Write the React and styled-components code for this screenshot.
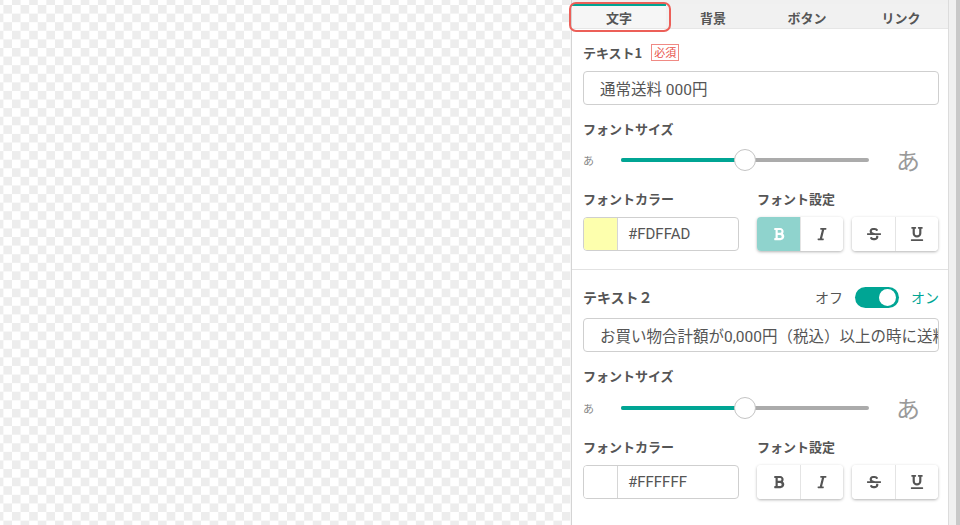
import styled, { createGlobalStyle } from "styled-components";
import { FaBold, FaItalic, FaStrikethrough, FaUnderline } from "react-icons/fa";

const GlobalStyle = createGlobalStyle`
  html, body {
    margin: 0;
    padding: 0;
  }
  body {
    font-family: "Noto Sans CJK JP", sans-serif;
    color: #555;
  }
`;

const TEAL = "#00a594";

const Page = styled.div`
  display: flex;
  width: 960px;
  height: 525px;
  overflow: hidden;
`;

const Canvas = styled.div`
  flex: 1;
  background-color: #fff;
  background-image: repeating-conic-gradient(#ededed 0 25%, #ffffff 0 50%);
  background-size: 17.2px 17.2px;
  background-position: 3.4px -3.6px;
`;

const Panel = styled.aside`
  position: relative;
  width: 376px;
  border-left: 1px solid #d4d4d4;
  border-right: 1px solid #dcdcdc;
  background: #fff;
  display: flex;
  flex-direction: column;
`;

const Scrollbar = styled.div`
  width: 11px;
  background: linear-gradient(to right, #f1f1f1 0 7px, #c9c9c9 7px);
`;

const TabHeader = styled.div`
  padding-top: 4px;
  background: #f0f0f0;
`;

const TabBar = styled.div`
  display: flex;
  height: 24px;
  background: #f1f1f1;
  border-bottom: 1px solid #e6e6e6;
`;

const Tab = styled.div`
  flex: 1;
  display: flex;
  align-items: center;
  justify-content: center;
  font-size: 13px;
  font-weight: 700;
  color: #555;
  border-top: 2px solid ${(p) => (p.$active ? TEAL : "transparent")};
  background: ${(p) => (p.$active ? "#f6f6f6" : "transparent")};
`;

const Highlight = styled.div`
  position: absolute;
  left: -3px;
  top: 2px;
  width: 98px;
  height: 26px;
  border: 2px solid #ec5f58;
  border-radius: 7px;
  pointer-events: none;
`;

const Section = styled.section`
  padding: ${(p) => p.$top}px 9px 18px 11px;
  border-bottom: ${(p) => (p.$divider ? "1px solid #e2e2e2" : "none")};
`;

const LabelRow = styled.div`
  display: flex;
  align-items: center;
  height: ${(p) => (p.$tall ? "22px" : "17px")};
  margin-top: ${(p) => p.$gap || 0}px;
`;

const Label = styled.div`
  font-size: ${(p) => (p.$big ? "14px" : "13px")};
  font-weight: 700;
  line-height: 16px;
  color: #555;
`;

const Required = styled.span`
  margin-left: 9px;
  padding: 0 2px;
  height: 17px;
  line-height: 15px;
  border: 1px solid #f08a84;
  color: #e8524a;
  font-size: 11px;
  box-sizing: border-box;
`;

const TextInput = styled.div`
  margin-top: 10px;
  height: 34px;
  box-sizing: border-box;
  border: 1px solid #cfcfcf;
  border-radius: 4px;
  padding: 0 16px;
  display: flex;
  align-items: center;
  font-family: "Roboto", "Noto Sans CJK JP", sans-serif;
  font-size: 15.5px;
  color: #555;
  white-space: nowrap;
  overflow: hidden;
`;

const SliderRow = styled.div`
  display: flex;
  align-items: center;
  height: 24px;
  margin-top: ${(p) => p.$gap}px;
`;

const SmallA = styled.span`
  width: 38px;
  font-size: 11px;
  color: #888;
`;

const BigA = styled.span`
  margin-left: 27px;
  font-size: 24px;
  color: #9a9a9a;
  line-height: 24px;
`;

const Track = styled.div`
  position: relative;
  width: 248px;
  height: 4px;
  border-radius: 2px;
  background: #ababab;
`;

const Fill = styled.div`
  height: 100%;
  border-radius: 2px;
  background: ${TEAL};
`;

const Knob = styled.div`
  position: absolute;
  top: 50%;
  width: 22px;
  height: 22px;
  margin: -11px 0 0 -11px;
  box-sizing: border-box;
  border-radius: 50%;
  border: 1px solid #c4c4c4;
  background: #fff;
`;

const TwoCols = styled.div`
  display: grid;
  grid-template-columns: 174px 1fr;
  margin-top: ${(p) => p.$gap}px;
`;

const ColHead = styled.div`
  height: 16px;
  display: flex;
  align-items: center;
`;

const ColorInput = styled.div`
  margin-top: 10px;
  width: 156px;
  height: 34px;
  box-sizing: border-box;
  border: 1px solid #cfcfcf;
  border-radius: 4px;
  display: flex;
  overflow: hidden;
`;

const Swatch = styled.div`
  width: 33px;
  border-right: 1px solid #d6d6d6;
  background: ${(p) => p.$color};
`;

const HexText = styled.div`
  display: flex;
  align-items: center;
  padding-left: 10px;
  font-family: "Roboto", sans-serif;
  font-size: 15px;
  color: #555;
`;

const Groups = styled.div`
  margin-top: 10px;
  display: flex;
  gap: 9px;
`;

const ButtonGroup = styled.div`
  display: flex;
  border-radius: 4px;
  overflow: hidden;
  box-shadow: 0 1px 3px rgba(0, 0, 0, 0.3);
`;

const StyleButton = styled.button`
  width: 43px;
  height: 34px;
  padding: 0;
  border: 0;
  display: flex;
  align-items: center;
  justify-content: center;
  font-size: 14px;
  background: ${(p) => (p.$active ? "#8fd3cd" : "#fff")};
  color: ${(p) => (p.$active ? "#fff" : "#555")};
  & + & {
    border-left: 1px solid #e4e4e4;
  }
`;

const SwitchWrap = styled.div`
  margin-left: auto;
  display: flex;
  align-items: center;
  font-size: 14px;
`;

const SwitchText = styled.span`
  color: ${(p) => (p.$on ? TEAL : "#555")};
`;

const Switch = styled.div`
  position: relative;
  width: 44px;
  height: 21px;
  margin: 0 12px;
  border-radius: 11px;
  background: ${TEAL};
`;

const SwitchKnob = styled.div`
  position: absolute;
  top: 2px;
  right: 3px;
  width: 17px;
  height: 17px;
  border-radius: 50%;
  background: #fff;
`;

function FontSlider({ value, gap }) {
  return (
    <SliderRow $gap={gap}>
      <SmallA>あ</SmallA>
      <Track>
        <Fill style={{ width: `${value}%` }} />
        <Knob style={{ left: `${value}%` }} />
      </Track>
      <BigA>あ</BigA>
    </SliderRow>
  );
}

function StyleControls({ color, bold, gap }) {
  return (
    <TwoCols $gap={gap}>
      <div>
        <ColHead>
          <Label>フォントカラー</Label>
        </ColHead>
        <ColorInput>
          <Swatch $color={color} />
          <HexText>{color}</HexText>
        </ColorInput>
      </div>
      <div>
        <ColHead>
          <Label>フォント設定</Label>
        </ColHead>
        <Groups>
          <ButtonGroup>
            <StyleButton $active={bold}>
              <FaBold />
            </StyleButton>
            <StyleButton>
              <FaItalic />
            </StyleButton>
          </ButtonGroup>
          <ButtonGroup>
            <StyleButton>
              <FaStrikethrough />
            </StyleButton>
            <StyleButton>
              <FaUnderline />
            </StyleButton>
          </ButtonGroup>
        </Groups>
      </div>
    </TwoCols>
  );
}

export default function App() {
  const tabs = ["文字", "背景", "ボタン", "リンク"];
  return (
    <>
      <GlobalStyle />
      <Page>
        <Canvas />
        <Panel>
          <TabHeader>
            <TabBar>
              {tabs.map((t, i) => (
                <Tab key={t} $active={i === 0}>
                  {t}
                </Tab>
              ))}
            </TabBar>
          </TabHeader>
          <Highlight />

          <Section $divider $top={15}>
            <LabelRow>
              <Label>テキスト1</Label>
              <Required>必須</Required>
            </LabelRow>
            <TextInput>通常送料 000円</TextInput>
            <LabelRow $gap={15}>
              <Label>フォントサイズ</Label>
            </LabelRow>
            <FontSlider value={50} gap={11} />
            <StyleControls color="#FDFFAD" bold gap={19} />
          </Section>

          <Section $top={16}>
            <LabelRow $tall>
              <Label $big>テキスト２</Label>
              <SwitchWrap>
                <SwitchText>オフ</SwitchText>
                <Switch>
                  <SwitchKnob />
                </Switch>
                <SwitchText $on>オン</SwitchText>
              </SwitchWrap>
            </LabelRow>
            <TextInput>お買い物合計額が0,000円（税込）以上の時に送料無料</TextInput>
            <LabelRow $gap={15}>
              <Label>フォントサイズ</Label>
            </LabelRow>
            <FontSlider value={50} gap={12} />
            <StyleControls color="#FFFFFF" gap={19} />
          </Section>
        </Panel>
        <Scrollbar />
      </Page>
    </>
  );
}
